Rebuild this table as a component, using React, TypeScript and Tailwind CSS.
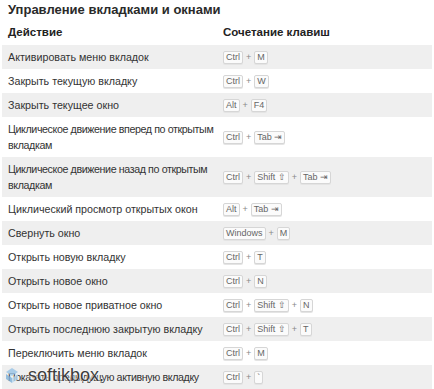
import React from 'react';

/* ---------------- data ---------------- */
type Row = { action: string; keys: string[]; tight?: boolean };

const rows: Row[] = [
  { action: 'Активировать меню вкладок', keys: ['Ctrl', 'M'] },
  { action: 'Закрыть текущую вкладку', keys: ['Ctrl', 'W'] },
  { action: 'Закрыть текущее окно', keys: ['Alt', 'F4'] },
  { action: 'Циклическое движение вперед по открытым вкладкам', keys: ['Ctrl', 'Tab ⇥'], tight: true },
  { action: 'Циклическое движение назад по открытым вкладкам', keys: ['Ctrl', 'Shift ⇧', 'Tab ⇥'], tight: true },
  { action: 'Циклический просмотр открытых окон', keys: ['Alt', 'Tab ⇥'] },
  { action: 'Свернуть окно', keys: ['Windows', 'M'] },
  { action: 'Открыть новую вкладку', keys: ['Ctrl', 'T'] },
  { action: 'Открыть новое окно', keys: ['Ctrl', 'N'] },
  { action: 'Открыть новое приватное окно', keys: ['Ctrl', 'Shift ⇧', 'N'] },
  { action: 'Открыть последнюю закрытую вкладку', keys: ['Ctrl', 'Shift ⇧', 'T'] },
  { action: 'Переключить меню вкладок', keys: ['Ctrl', 'M'] },
  { action: 'Показать предыдущую активную вкладку', keys: ['Ctrl', '`'], tight: true },
];

/* ---------------- parts ---------------- */
function Key({ label }: { label: string }) {
  return (
    <span className="inline-flex h-[13px] items-center rounded-[2px] border border-[#d6d6d6] bg-[#fbfbfb] px-[2px] text-[9px] leading-none text-[#666] shadow-[0_1px_0_#e4e4e4]">
      {label}
    </span>
  );
}

function Keys({ keys }: { keys: string[] }) {
  return (
    <div className="flex items-center gap-[3px]">
      {keys.map((k, i) => (
        <React.Fragment key={i}>
          {i > 0 && <span className="text-[9px] leading-none text-[#888]">+</span>}
          <Key label={k} />
        </React.Fragment>
      ))}
    </div>
  );
}

function Watermark() {
  return (
    <div className="pointer-events-none absolute left-[4px] top-[366px] flex items-center gap-[8px]">
      <svg width="16" height="18" viewBox="0 0 16 18">
        <path d="M2 6 L8 2 L14 6 L8 10 Z" fill="#9cc6e6" opacity="0.85" />
        <path d="M2 8 L8 12 L8 17 L2 13 Z" fill="#7fb2da" opacity="0.8" />
        <path d="M14 8 L8 12 L8 17 L14 13 Z" fill="#b7d7ef" opacity="0.8" />
      </svg>
      <span className="text-[18px] leading-none text-[#3d3d3d] [text-shadow:0_0_2px_#fff,0_0_2px_#fff]">
        softikbox.
      </span>
    </div>
  );
}

/* ---------------- page ---------------- */
export default function App() {
  return (
    <div className="relative h-[389px] w-[434px] overflow-hidden bg-white font-['Liberation_Sans',Arial,sans-serif] text-[#333]">
      <div className="ml-[2px] w-[430px]">
        <h2 className="h-[21px] pl-[6px] pt-[1px] text-[13px] font-bold leading-[17px] text-[#2a2a2a]">
          Управление вкладками и окнами
        </h2>

        <div className="flex h-[24px] items-center text-[11.5px] font-bold text-[#222]">
          <div className="w-[215px] pl-[6px]">Действие</div>
          <div className="flex-1 px-[6px]">Сочетание клавиш</div>
        </div>

        {rows.map((r, i) => (
          <div key={i} className={`flex ${i % 2 === 0 ? 'bg-[#efefef]' : 'bg-white'}`}>
            <div
              className={`w-[215px] py-[4px] pl-[6px] pr-[1px] text-[10.7px] leading-[16px] ${
                r.tight ? 'tracking-[-0.4px]' : ''
              }`}
            >
              {r.action}
            </div>
            <div className="flex flex-1 items-center px-[6px]">
              <Keys keys={r.keys} />
            </div>
          </div>
        ))}
      </div>
      <Watermark />
    </div>
  );
}
